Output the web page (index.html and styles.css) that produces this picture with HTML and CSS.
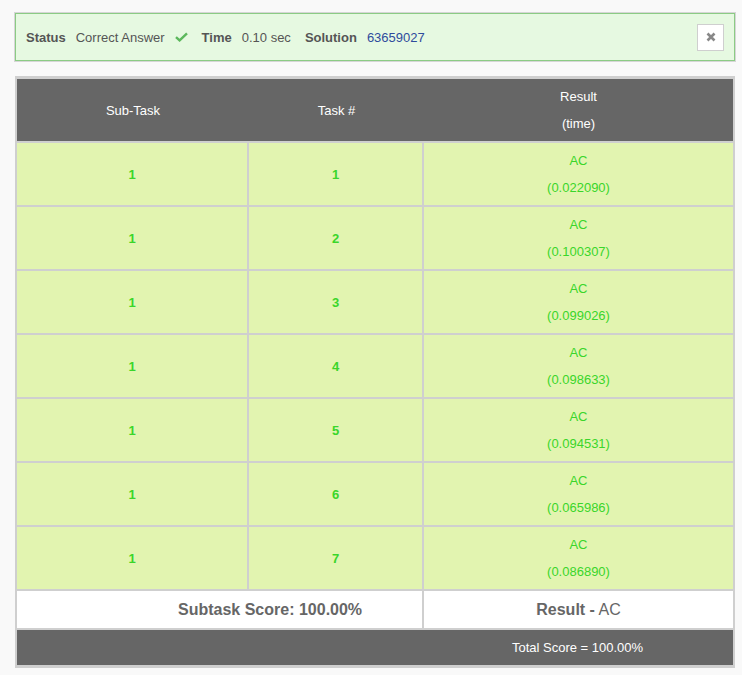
FILE: index.html
```html
<!DOCTYPE html>
<html>
<head>
<meta charset="utf-8">
<link rel="stylesheet" href="styles.css">
</head>
<body>
<div class="page">
  <div class="alert">
    <div class="status">
      <span class="label">Status</span>
      <span class="value">Correct Answer</span>
      <svg class="check" width="13" height="10" viewBox="0 0 13 10"><path d="M1 5.2 L4.6 8.4 L12 1.4" fill="none" stroke="#5cb85c" stroke-width="2.4" stroke-linejoin="miter"/></svg>
      <span class="label gap">Time</span>
      <span class="value">0.10 sec</span>
      <span class="label gap">Solution</span>
      <a class="link" href="#">63659027</a>
    </div>
    <button class="close" type="button">
      <svg width="10" height="10" viewBox="0 0 10 10"><path d="M1.5 1.5 L8.5 8.5 M8.5 1.5 L1.5 8.5" stroke="#888" stroke-width="2.6" stroke-linecap="butt"/></svg>
    </button>
  </div>

  <div class="table">
    <div class="thead">
      <div class="th">Sub-Task</div>
      <div class="th">Task #</div>
      <div class="th two">Result<br>(time)</div>
    </div>

    <div class="td num">1</div><div class="td num">1</div><div class="td res">AC<br>(0.022090)</div>
    <div class="td num">1</div><div class="td num">2</div><div class="td res">AC<br>(0.100307)</div>
    <div class="td num">1</div><div class="td num">3</div><div class="td res">AC<br>(0.099026)</div>
    <div class="td num">1</div><div class="td num">4</div><div class="td res">AC<br>(0.098633)</div>
    <div class="td num">1</div><div class="td num">5</div><div class="td res">AC<br>(0.094531)</div>
    <div class="td num">1</div><div class="td num">6</div><div class="td res">AC<br>(0.065986)</div>
    <div class="td num">1</div><div class="td num">7</div><div class="td res">AC<br>(0.086890)</div>

    <div class="sum score">Subtask Score: 100.00%</div>
    <div class="sum result"><span><b>Result -</b> AC</span></div>

    <div class="total"><span class="total-text">Total Score = 100.00%</span></div>
  </div>
</div>
</body>
</html>
```

FILE: styles.css
```css
html, body {
  margin: 0;
  padding: 0;
  background: #f9f9f9;
  font-family: "Liberation Sans", Arial, Helvetica, sans-serif;
}

.page {
  width: 720px;
  padding: 13px 0 0 15px;
}

.alert {
  box-sizing: border-box;
  height: 48px;
  background: #e6f9e1;
  border: 1px solid #8bcb84;
  box-shadow: 0 0 0 1px #d6d6d6;
  display: flex;
  align-items: center;
  justify-content: space-between;
  padding: 0 10px;
  color: #555;
  font-size: 13px;
}

.status {
  display: flex;
  align-items: center;
}

.label {
  font-weight: bold;
  color: #555;
  margin-right: 10px;
}

.label.gap {
  margin-left: 14px;
}

.value {
  color: #555;
}

.check {
  margin-left: 10px;
}

.link {
  color: #2f4b9c;
  text-decoration: none;
}

.close {
  width: 27px;
  height: 27px;
  box-sizing: border-box;
  background: #fff;
  border: 1px solid #cfcfcf;
  padding: 0;
  display: flex;
  align-items: center;
  justify-content: center;
}

.table {
  margin-top: 15px;
  display: grid;
  grid-template-columns: 230px 173px 309px;
  gap: 2px;
  padding: 3px 2px;
  background: #cfcfcf;
}

.thead {
  grid-column: 1 / -1;
  display: grid;
  grid-template-columns: 232px 175px 305px;
  background: #666;
}

.th {
  height: 62px;
  color: #fff;
  font-size: 13px;
  display: flex;
  align-items: center;
  justify-content: center;
  text-align: center;
}

.th.two {
  line-height: 27px;
  padding-left: 4px;
}

.td {
  height: 62px;
  background: #e2f4b0;
  color: #3ad62a;
  font-size: 13px;
  display: flex;
  align-items: center;
  justify-content: center;
  text-align: center;
}

.td.num {
  font-weight: bold;
}

.td.res {
  line-height: 27px;
}

.sum {
  height: 37px;
  background: #fff;
  color: #666;
  font-size: 16px;
  display: flex;
  align-items: center;
}

.sum.score {
  grid-column: span 2;
  font-weight: bold;
  padding-left: 161px;
}

.sum.result {
  justify-content: center;
}

.total {
  grid-column: 1 / -1;
  height: 35px;
  background: #666;
  color: #fff;
  font-size: 13px;
  display: flex;
  align-items: center;
  justify-content: center;
  padding-left: 405px;
}
```
